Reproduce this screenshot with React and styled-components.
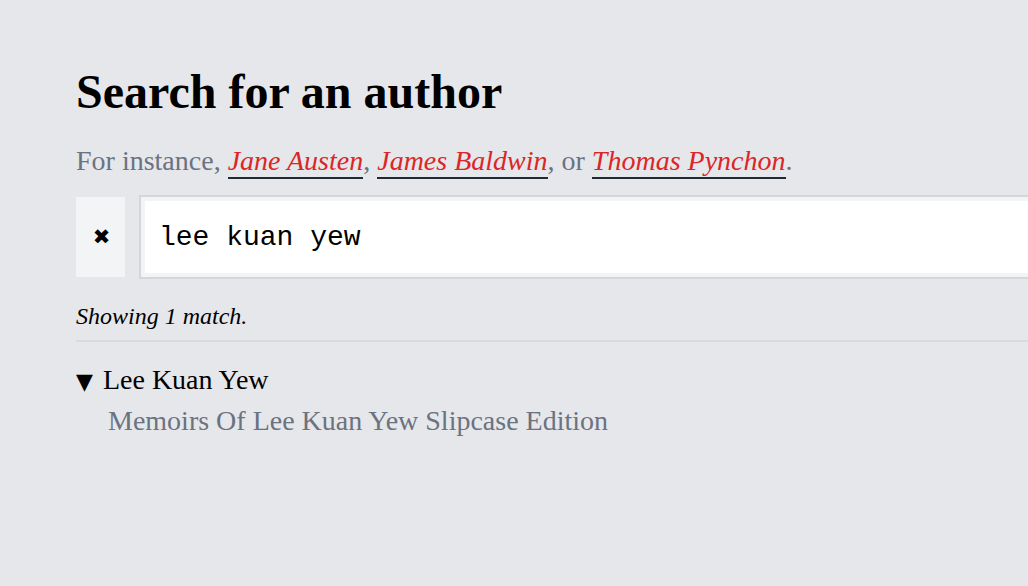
import React from "react";
import styled, { createGlobalStyle } from "styled-components";

const GlobalStyle = createGlobalStyle`
    html, body {
        margin: 0;
        padding: 0;
        background-color: #e5e7eb;
        overflow: hidden;
    }
    body {
        font-family: "Liberation Serif", "Times New Roman", serif;
        color: #000;
    }
`;

let Page = styled.main`
    width: 1000px;
    padding: 64px 0 0 76px;
`;

let Title = styled.h1`
    font-size: 48px;
    font-weight: 700;
    line-height: normal;
    margin: 0;
`;

let Hint = styled.p`
    font-size: 28px;
    line-height: normal;
    color: #6b7280;
    margin: 26px 0 0 0;
`;

let Example = styled.a`
    color: #dc2626;
    font-style: italic;
    text-decoration: none;
    border-bottom: 2px solid #1f2937;
    padding-bottom: 1px;
    cursor: pointer;
`;

let SearchBar = styled.div`
    display: flex;
    align-items: center;
    gap: 14px;
    margin-top: 18px;
`;

let ClearButton = styled.button`
    flex: none;
    width: 49px;
    height: 80px;
    border: none;
    background-color: #f3f4f6;
    color: #000;
    font-family: "DejaVu Sans", sans-serif;
    font-size: 21px;
    line-height: 1;
    padding: 0 0 0 2px;
    cursor: pointer;
`;

let SearchInput = styled.input`
    flex: 1;
    height: 84px;
    box-sizing: border-box;
    border: 2px solid #d4d6db;
    box-shadow: inset 0 0 0 4px #f3f4f6;
    background-color: #fff;
    padding: 0 0 0 18px;
    font-family: "Liberation Mono", "Courier New", monospace;
    font-size: 28px;
    color: #000;
    outline: none;
`;

let Summary = styled.p`
    font-size: 24px;
    font-style: italic;
    line-height: normal;
    margin: 24px 0 0 0;
    padding-bottom: 10px;
    border-bottom: 2px solid #d8dadf;
`;

let AuthorList = styled.ul`
    list-style: none;
    margin: 22px 0 0 0;
    padding: 0;
`;

let AuthorName = styled.div`
    font-size: 28px;
    line-height: normal;
`;

let Marker = styled.span`
    font-family: "DejaVu Sans", sans-serif;
    font-size: 22px;
    margin-right: 10px;
`;

let BookList = styled.ul`
    list-style: none;
    margin: 0;
    padding: 0 0 0 32px;
`;

let Book = styled.li`
    font-size: 28px;
    line-height: normal;
    color: #6b7280;
    margin-top: 9px;
`;

const examples = ["Jane Austen", "James Baldwin", "Thomas Pynchon"];

const results = [
    { name: "Lee Kuan Yew", books: ["Memoirs Of Lee Kuan Yew Slipcase Edition"] }
];

const App = () => {
    return (
        <>
            <GlobalStyle />
            <Page>
                <Title>Search for an author</Title>
                <Hint>
                    For instance, <Example>{examples[0]}</Example>, <Example>{examples[1]}</Example>, or{" "}
                    <Example>{examples[2]}</Example>.
                </Hint>
                <SearchBar>
                    <ClearButton aria-label="Clear">✖</ClearButton>
                    <SearchInput defaultValue="lee kuan yew" spellCheck={false} />
                </SearchBar>
                <Summary>Showing {results.length} match.</Summary>
                <AuthorList>
                    {results.map((author) => (
                        <li key={author.name}>
                            <AuthorName>
                                <Marker>▼</Marker>
                                {author.name}
                            </AuthorName>
                            <BookList>
                                {author.books.map((book) => (
                                    <Book key={book}>{book}</Book>
                                ))}
                            </BookList>
                        </li>
                    ))}
                </AuthorList>
            </Page>
        </>
    );
};

export default App;
